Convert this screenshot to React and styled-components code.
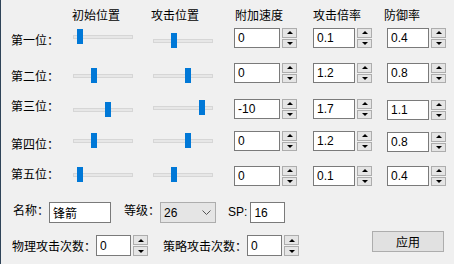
import { Fragment } from 'react'
import styled, { createGlobalStyle } from 'styled-components'

const GlobalStyle = createGlobalStyle`
  html, body {
    margin: 0;
    padding: 0;
    background: #f0f0f0;
  }
`

const Window = styled.div`
  width: 453px;
  height: 264px;
  border-left: 1px solid #2f4458;
  background: #f0f0f0;
  font-family: 'Noto Sans CJK SC', 'Liberation Sans', sans-serif;
  font-size: 12px;
  line-height: 14px;
  color: #000;
  overflow: hidden;
`

const Table = styled.div`
  display: grid;
  grid-template-columns: 62px 80px 81px 79px 74px 1fr;
  grid-template-rows: 28px 35px 36px 32px 35px 20px;
  align-items: start;
  padding-left: 10px;
`

const HeadLabel = styled.div`
  margin-top: 8px;
  margin-left: ${(p) => p.$left || 0}px;
  white-space: nowrap;
`

const RowLabel = styled.div`
  margin-top: ${(p) => p.$top}px;
  white-space: nowrap;
`

const Slider = styled.div`
  position: relative;
  width: 60px;
  height: 15px;
  margin-top: ${(p) => p.$top}px;
  &::before {
    content: '';
    position: absolute;
    left: 0;
    right: 0;
    top: 6px;
    height: 2px;
    background: #e7e7e7;
    border: 1px solid #d6d6d6;
  }
`

const Thumb = styled.div`
  position: absolute;
  top: 0;
  width: 6px;
  height: 15px;
  background: #0078d7;
`

const Spin = styled.div`
  display: flex;
  gap: 2px;
  margin-top: ${(p) => p.$top || 0}px;
`

const NumInput = styled.input`
  box-sizing: border-box;
  width: ${(p) => p.$w}px;
  height: ${(p) => p.$h || 20}px;
  margin: 0;
  padding: 0 0 0 3px;
  border: 1px solid #7a7a7a;
  background: #fff;
  font-family: 'Liberation Sans', sans-serif;
  font-size: 12px;
  color: #000;
  outline: none;
`

const Arrows = styled.div`
  display: flex;
  flex-direction: column;
  gap: 1px;
  width: 15px;
  height: ${(p) => p.$h || 20}px;
`

const ArrowBtn = styled.div`
  flex: 1;
  box-sizing: border-box;
  border: 1px solid #adadad;
  background: #e5e5e5;
  display: flex;
  align-items: center;
  justify-content: center;
  &::after {
    content: '';
    width: 0;
    height: 0;
    border-left: 3px solid transparent;
    border-right: 3px solid transparent;
    ${(p) => (p.$down ? 'border-top: 3px solid #000;' : 'border-bottom: 3px solid #000;')}
  }
`

const Footer = styled.div`
  display: flex;
  flex-direction: column;
  gap: 8px;
  margin-top: 16px;
`

const FormRow = styled.div`
  display: flex;
  align-items: flex-start;
  padding-left: ${(p) => p.$indent}px;
  padding-right: 10px;
`

const FormLabel = styled.div`
  margin-top: ${(p) => p.$top || 0}px;
  margin-left: ${(p) => p.$left || 0}px;
  white-space: nowrap;
  font-family: ${(p) => (p.$latin ? "'Liberation Sans', sans-serif" : 'inherit')};
  margin-right: ${(p) => (p.$latin ? 3 : 0)}px;
`

const TextBox = styled(NumInput)`
  font-family: ${(p) => (p.$cjk ? "'Noto Sans CJK SC', sans-serif" : "'Liberation Sans', sans-serif")};
  margin-top: ${(p) => p.$top || 0}px;
`

const Combo = styled.div`
  box-sizing: border-box;
  width: 56px;
  height: 21px;
  border: 1px solid #adadad;
  background: #e5e5e5;
  display: flex;
  align-items: center;
  justify-content: space-between;
  padding: 0 4px 0 3px;
  font-family: 'Liberation Sans', sans-serif;
`

const Button = styled.div`
  box-sizing: border-box;
  width: 72px;
  height: 21px;
  margin-left: auto;
  border: 1px solid #adadad;
  background: #e1e1e1;
  display: flex;
  align-items: center;
  justify-content: center;
`

const rows = [
  { label: '第一位：', labelTop: 5, init: 0, initTop: 1, atk: 1, atkTop: 5, speed: '0', mult: '0.1', def: '0.4', defTop: 0 },
  { label: '第二位：', labelTop: 6, init: 1, initTop: 5, atk: 2, atkTop: 5, speed: '0', mult: '1.2', def: '0.8', defTop: 0 },
  { label: '第三位：', labelTop: 0, init: 2, initTop: 3, atk: 3, atkTop: 1, speed: '-10', mult: '1.7', def: '1.1', defTop: 1 },
  { label: '第四位：', labelTop: 6, init: 1, initTop: 2, atk: 2, atkTop: 2, speed: '0', mult: '1.2', def: '0.8', defTop: 1 },
  { label: '第五位：', labelTop: 1, init: 0, initTop: 1, atk: 1, atkTop: 1, speed: '0', mult: '0.1', def: '0.4', defTop: 0 },
]

const SpinBox = ({ value, width, top, h }) => (
  <Spin $top={top}>
    <NumInput $w={width} $h={h} value={value} readOnly />
    <Arrows $h={h}>
      <ArrowBtn />
      <ArrowBtn $down />
    </Arrows>
  </Spin>
)

const SliderBar = ({ step, top }) => (
  <Slider $top={top}>
    <Thumb style={{ left: 4 + step * 14 }} />
  </Slider>
)

const App = () => {
  return (
    <Window>
      <GlobalStyle />
      <Table>
        <div />
        <HeadLabel $left={-1}>初始位置</HeadLabel>
        <HeadLabel $left={-2}>攻击位置</HeadLabel>
        <HeadLabel $left={1}>附加速度</HeadLabel>
        <HeadLabel>攻击倍率</HeadLabel>
        <HeadLabel $left={-3}>防御率</HeadLabel>
        {rows.map((r) => (
          <Fragment key={r.label}>
            <RowLabel $top={r.labelTop}>{r.label}</RowLabel>
            <SliderBar step={r.init} top={r.initTop} />
            <SliderBar step={r.atk} top={r.atkTop} />
            <SpinBox value={r.speed} width={46} />
            <SpinBox value={r.mult} width={42} />
            <SpinBox value={r.def} width={42} top={r.defTop} />
          </Fragment>
        ))}
      </Table>
      <Footer>
        <FormRow $indent={12}>
          <FormLabel $top={1}>名称：</FormLabel>
          <TextBox $w={62} $h={21} $cjk value="锋箭" readOnly />
          <FormLabel $left={13} $top={1}>等级：</FormLabel>
          <Combo>
            26
            <svg width="9" height="5" viewBox="0 0 9 5">
              <path d="M0.5 0.5 L4.5 4.5 L8.5 0.5" fill="none" stroke="#555" strokeWidth="1" />
            </svg>
          </Combo>
          <FormLabel $left={12} $top={3} $latin>SP:</FormLabel>
          <TextBox $w={35} $h={21} value="16" readOnly />
        </FormRow>
        <FormRow $indent={11}>
          <FormLabel $top={8}>物理攻击次数：</FormLabel>
          <Spin $top={4}>
            <NumInput $w={35} $h={21} value="0" readOnly />
            <Arrows $h={21}>
              <ArrowBtn />
              <ArrowBtn $down />
            </Arrows>
          </Spin>
          <FormLabel $top={8} $left={15}>策略攻击次数：</FormLabel>
          <Spin $top={4}>
            <NumInput $w={35} $h={21} value="0" readOnly />
            <Arrows $h={21}>
              <ArrowBtn />
              <ArrowBtn $down />
            </Arrows>
          </Spin>
          <Button>应用</Button>
        </FormRow>
      </Footer>
    </Window>
  )
}

export default App
